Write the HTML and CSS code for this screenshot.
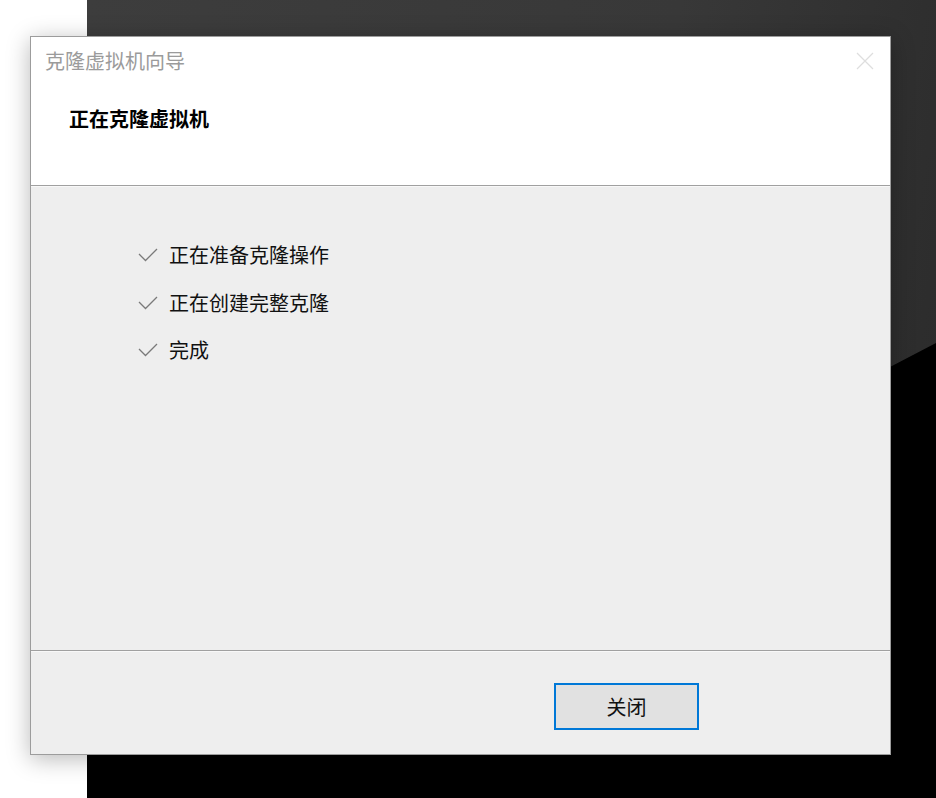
FILE: index.html
```html
<!DOCTYPE html>
<html lang="zh-CN">
<head>
<meta charset="utf-8">
<title>克隆虚拟机向导</title>
<link rel="stylesheet" href="styles.css">
</head>
<body>
<div class="desktop">
  <div class="bg-dark"></div>
  <div class="bg-black"></div>
  <div class="dialog">
    <div class="header">
      <div class="titlebar">
        <span class="title">克隆虚拟机向导</span>
        <svg class="close" width="18" height="18" viewBox="0 0 18 18"><path d="M1 1 L17 17 M17 1 L1 17" stroke="#dedede" stroke-width="1.2" fill="none"/></svg>
      </div>
      <div class="heading">正在克隆虚拟机</div>
    </div>
    <div class="body">
      <ul class="steps">
        <li class="step"><svg class="check" width="20" height="14" viewBox="0 0 20 14"><path d="M1 6 L7.5 12.5 L19 1" stroke="#7a7a7a" stroke-width="1.3" fill="none"/></svg><span>正在准备克隆操作</span></li>
        <li class="step"><svg class="check" width="20" height="14" viewBox="0 0 20 14"><path d="M1 6 L7.5 12.5 L19 1" stroke="#7a7a7a" stroke-width="1.3" fill="none"/></svg><span>正在创建完整克隆</span></li>
        <li class="step"><svg class="check" width="20" height="14" viewBox="0 0 20 14"><path d="M1 6 L7.5 12.5 L19 1" stroke="#7a7a7a" stroke-width="1.3" fill="none"/></svg><span>完成</span></li>
      </ul>
    </div>
    <div class="footer">
      <button class="btn">关闭</button>
    </div>
  </div>
</div>
</body>
</html>
```
FILE: styles.css
```css
* { box-sizing: border-box; }
html, body { margin: 0; padding: 0; }
body {
  width: 936px;
  height: 798px;
  overflow: hidden;
  background: #ffffff;
  font-family: "Noto Sans CJK SC", "Noto Sans", sans-serif;
}
.desktop {
  position: relative;
  width: 936px;
  height: 798px;
}
.bg-dark {
  position: absolute;
  left: 87px;
  top: 0;
  right: 0;
  bottom: 0;
  background: linear-gradient(100deg, #3d3d3d 0%, #383838 60%, #2c2c2c 93%, #2a2a2a 100%);
}
.bg-black {
  position: absolute;
  left: 87px;
  top: 0;
  right: 0;
  bottom: 0;
  background: #000;
  clip-path: polygon(100% 343px, 803px 367px, 0 740px, 0 100%, 100% 100%);
}
.dialog {
  position: absolute;
  left: 30px;
  top: 36px;
  width: 861px;
  height: 719px;
  border: 1px solid #9c9c9c;
  background: #eeeeee;
  display: flex;
  flex-direction: column;
  box-shadow: 0 4px 22px rgba(0, 0, 0, 0.28);
}
.header {
  height: 149px;
  background: #ffffff;
  border-bottom: 1px solid #a0a0a0;
  flex: none;
}
.titlebar {
  display: flex;
  justify-content: space-between;
  align-items: center;
  height: 48px;
  padding: 0 16px 0 14px;
}
.title {
  font-size: 20px;
  color: #9b9b9b;
  line-height: 48px;
}
.close { display: block; }
.heading {
  padding: 13px 0 0 38px;
  font-size: 20px;
  font-weight: bold;
  color: #000;
  line-height: 42px;
}
.body {
  flex: 1;
  border-bottom: 1px solid #a0a0a0;
  box-shadow: inset 0 1px 0 #f8f8f8;
}
.steps {
  list-style: none;
  margin: 0;
  padding: 45px 0 0 107px;
}
.step {
  display: flex;
  align-items: center;
  gap: 11px;
  height: 47.5px;
  font-size: 20px;
  color: #111;
}
.check { display: block; flex: none; margin-top: 1px; }
.footer {
  height: 103px;
  flex: none;
  display: flex;
  justify-content: flex-end;
  align-items: flex-start;
  padding: 32px 191px 0 0;
  box-shadow: inset 0 1px 0 #f8f8f8;
}
.btn {
  width: 145px;
  height: 47px;
  border: 2px solid #0078d7;
  background: #e1e1e1;
  font-family: inherit;
  font-size: 20px;
  color: #111;
  padding: 0;
  line-height: 1;
}
```
